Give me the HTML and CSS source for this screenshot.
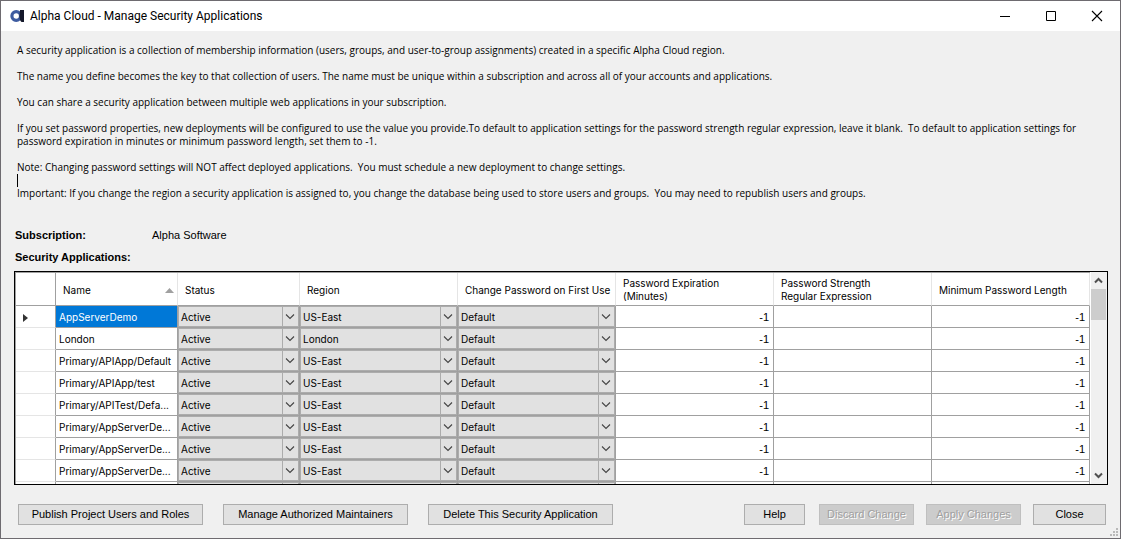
FILE: index.html
```html
<!DOCTYPE html>
<html lang="en">
<head>
<meta charset="utf-8">
<title>Alpha Cloud - Manage Security Applications</title>
<link rel="stylesheet" href="styles.css">
</head>
<body>
<div class="window">
  <header class="titlebar">
    <svg class="logo" width="14" height="14" viewBox="0 0 14 14" aria-hidden="true"><ellipse cx="6.200" cy="7" rx="4.300" ry="4.300" fill="none" stroke="#3d5ba0" stroke-width="3.200"/><path d="M10 1h4v12h-2.500C10 12 9.500 10 9.500 7z" fill="#14182a"/></svg>
    <h1 class="title">Alpha Cloud - Manage Security Applications</h1>
    <div class="caption-buttons">
      <button class="caption" type="button" aria-label="Minimize"><svg width="12" height="12" viewBox="0 0 12 12"><path d="M1 6.500h10" stroke="#000"/></svg></button>
      <button class="caption" type="button" aria-label="Maximize"><svg width="12" height="12" viewBox="0 0 12 12"><path d="M1.500 1.500h9v9h-9z" fill="none" stroke="#000"/></svg></button>
      <button class="caption" type="button" aria-label="Close window"><svg width="12" height="12" viewBox="0 0 12 12"><path d="M1 1l10 10M11 1L1 11" stroke="#000" stroke-width="1.100"/></svg></button>
    </div>
  </header>
  <main class="content">
    <div class="intro">
      <p>A security application is a collection of membership information (users, groups, and user-to-group assignments) created in a specific Alpha Cloud region.</p>
      <p>The name you define becomes the key to that collection of users. The name must be unique within a subscription and across all of your accounts and applications.</p>
      <p>You can share a security application between multiple web applications in your subscription.</p>
      <p>If you set password properties, new deployments will be configured to use the value you provide.To default to application settings for the password strength regular expression, leave it blank.&nbsp; To default to application settings for<br>password expiration in minutes or minimum password length, set them to -1.</p>
      <p class="before-caret">Note: Changing password settings will NOT affect deployed applications.&nbsp; You must schedule a new deployment to change settings.</p>
      <div class="caret"></div>
      <p>Important: If you change the region a security application is assigned to, you change the database being used to store users and groups.&nbsp; You may need to republish users and groups.</p>
    </div>
    <div class="field"><span class="label">Subscription:</span><span>Alpha Software</span></div>
    <h2 class="label" id="apps">Security Applications:</h2>
    <div class="grid-box">
      <div class="viewport">
        <table class="grid" aria-labelledby="apps">
          <colgroup><col class="c-row"><col class="c-short"><col class="c-short"><col class="c-long"><col class="c-long"><col class="c-long"><col class="c-long"><col class="c-long"></colgroup>
          <thead><tr>
            <th class="rowhead"></th>
            <th><div class="sorted"><span>Name</span><svg width="9" height="5" viewBox="0 0 9 5"><path d="M4.500 0L9 5H0z" fill="#a0a0a0"/></svg></div></th>
            <th>Status</th><th>Region</th><th>Change Password on First Use</th>
            <th>Password Expiration<br>(Minutes)</th><th>Password Strength<br>Regular Expression</th><th>Minimum Password Length</th>
          </tr></thead>
          <tbody id="rows"></tbody>
        </table>
      </div>
      <div class="scrollbar" aria-hidden="true">
        <svg width="15" height="17" viewBox="0 0 15 17"><path d="M4 10.500l3.500-3.500 3.500 3.500" fill="none" stroke="#505050" stroke-width="2"/></svg>
        <div class="track"><div class="thumb"></div></div>
        <svg width="15" height="17" viewBox="0 0 15 17"><path d="M4 6.500l3.500 3.500 3.500-3.500" fill="none" stroke="#505050" stroke-width="2"/></svg>
      </div>
    </div>
    <footer class="actions">
      <div class="left">
        <button class="btn wide" type="button">Publish Project Users and Roles</button>
        <button class="btn wide" type="button">Manage Authorized Maintainers</button>
        <button class="btn wide" type="button">Delete This Security Application</button>
      </div>
      <div class="right">
        <button class="btn help" type="button">Help</button>
        <button class="btn mid" type="button" disabled>Discard Change</button>
        <button class="btn mid" type="button" disabled>Apply Changes</button>
        <button class="btn close" type="button">Close</button>
      </div>
    </footer>
  </main>
  <svg class="grip" width="9" height="9" viewBox="0 0 9 9" aria-hidden="true"><path d="M6 0h2v2H6zM3 3h2v2H3zM6 3h2v2H6zM0 6h2v2H0zM3 6h2v2H3zM6 6h2v2H6z" fill="#b9b9b9"/></svg>
</div>
<script src="grid.js"></script>
</body>
</html>
```
FILE: styles.css
```css
* { box-sizing: border-box; }
body { margin: 0; font: 11px/13px "Liberation Sans", Arial, sans-serif; color: #000; }
h1, h2, p { margin: 0; }
button, select { font: inherit; color: inherit; margin: 0; }
.window { position: relative; display: flex; flex-direction: column; height: 100vh; background: #f0f0f0; border: 1px solid #6e6b70; }
.titlebar { display: flex; align-items: center; flex: none; height: 30px; padding-left: 9px; background: #fff; }
.logo { display: block; }
.title { flex: 1; margin-left: 6px; font: 12px/16px Roboto, sans-serif; }
.caption-buttons { display: flex; }
.caption { display: grid; place-items: center; width: 46px; height: 30px; padding: 0; border: 0; background: none; }
.content { display: flex; flex-direction: column; flex: 1; min-height: 0; padding: 13px 12px 13px 14px; }
.intro { padding-left: 2px; font: 10px/13px "Open Sans", sans-serif; white-space: nowrap; }
.intro p { margin-bottom: 13px; }
.intro p.before-caret, .intro p:last-child { margin-bottom: 0; }
.caret { width: 1px; height: 13px; background: #000; }
.field { display: flex; margin: 29px 0 9px; }
.field .label { width: 137px; }
.label { font: bold 11px/13px "Liberation Sans", Arial, sans-serif; }
.grid-box { display: flex; flex: 1; min-height: 0; margin: 7px 0 19px -1px; border: 1px solid #000; background: #fff; }
.viewport { flex: 1; min-width: 0; overflow: hidden; border-top: 1px solid #a0a0a0; border-left: 1px solid #a0a0a0; }
.grid { width: 100%; table-layout: fixed; border-collapse: separate; border-spacing: 0; font: 10px/13px Inter, sans-serif; }
.c-row { width: 40px; }
.c-short { width: 122px; }
.c-long { width: 158px; }
.grid th { height: 33px; padding: 2px 0 0 7px; text-align: left; font-weight: 400; white-space: nowrap; border-right: 1px solid #e5e5e5; border-bottom: 1px solid #a0a0a0; }
.grid th.rowhead { padding: 2px 0 0 5px; border-right-color: #a0a0a0; }
.sorted { display: flex; align-items: center; justify-content: space-between; padding-right: 3px; }
.grid td { height: 22px; padding: 2px 3px 0; white-space: nowrap; border-right: 1px solid #a0a0a0; border-bottom: 1px solid #a0a0a0; }
.grid tbody th.rowhead { height: 22px; border-bottom-color: #e5e5e5; }
.rowhead svg { display: block; }
.grid td.selected { background: #0078d7; color: #fff; }
.grid td.num { padding-right: 4px; text-align: right; font-family: "Liberation Sans", Arial, sans-serif; font-size: 11px; }
.grid td.pick { padding: 0; }
.combo { display: grid; grid-template-columns: 1fr 16px; height: 21px; border: 1px solid #acacac; background: #e1e1e1; }
.combo select { grid-area: 1 / 1 / 2 / 3; width: 100%; height: 19px; padding: 2px 2px 0; border: 0; background: none; appearance: none; }
.combo svg { grid-area: 1 / 2; pointer-events: none; }
.scrollbar { display: flex; flex-direction: column; flex: none; width: 17px; padding-right: 1px; background: #f0f0f0; border-left: 1px solid #fff; }
.track { flex: 1; }
.thumb { height: 31px; background: #cdcdcd; }
.actions { display: flex; justify-content: space-between; flex: none; padding: 0 2px 0 3px; }
.left { display: flex; gap: 20px; }
.right { display: flex; gap: 12px; }
.btn { height: 21px; padding: 0; border: 1px solid #adadad; background: #e1e1e1; text-align: center; white-space: nowrap; }
.btn:disabled { border-color: #bfbfbf; background: #ccc; color: #a0a0a0; text-shadow: 1px 1px 0 #fff; }
.wide { width: 185px; }
.help { width: 61px; margin-right: 2px; }
.mid { width: 95px; }
.close { width: 73px; }
.grip { position: absolute; right: 1px; bottom: 1px; }
```
FILE: grid.js
```js
const apps = [
  ["AppServerDemo", "US-East"],
  ["London", "London"],
  ["Primary/APIApp/Default", "US-East"],
  ["Primary/APIApp/test", "US-East"],
  ["Primary/APITest/Defa...", "US-East"],
  ["Primary/AppServerDe...", "US-East"],
  ["Primary/AppServerDe...", "US-East"],
  ["Primary/AppServerDe...", "US-East"]
];

const combo = (label, value) => `<td class="pick"><div class="combo">
  <select aria-label="${label}"><option>${value}</option></select>
  <svg width="16" height="19" viewBox="0 0 16 19"><path d="M.5 0v19" stroke="#acacac"/><path d="M4 7.500l4 4 4-4" fill="none" stroke="#444" stroke-width="1.100"/></svg>
</div></td>`;

const marker = '<svg width="8" height="10" viewBox="0 0 8 10"><path d="M2 1l5 4-5 4z" fill="#333"/></svg>';

const row = (name, status, region, change, number, mark) => `<tr>
  <th class="rowhead" scope="row">${mark ? marker : ""}</th>
  <td class="${mark ? "selected" : ""}">${name}</td>
  ${combo("Status", status)}${combo("Region", region)}${combo("Change password on first use", change)}
  <td class="num">${number}</td><td></td><td class="num">${number}</td>
</tr>`;

document.getElementById("rows").innerHTML =
  apps.map(([name, region], i) => row(name, "Active", region, "Default", "-1", i === 0)).join("") +
  row("", "", "", "", "", false);
```
